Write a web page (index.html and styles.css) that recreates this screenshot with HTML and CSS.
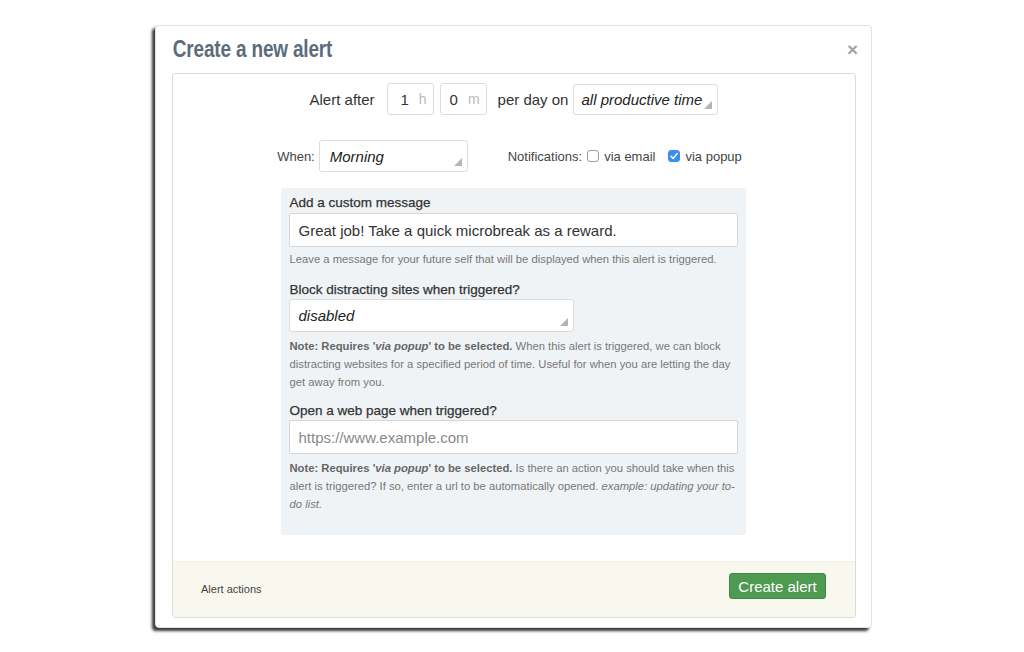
FILE: index.html
```html
<!DOCTYPE html>
<html>
<head>
<meta charset="utf-8">
<link rel="stylesheet" href="styles.css">
</head>
<body>
<div class="dialog">
  <div class="dialog-header">
    <h1 class="title">Create a new alert</h1>
    <span class="close">&times;</span>
  </div>
  <div class="panel">
    <div class="panel-body">
      <div class="row-after">
        <span class="txt">Alert after</span>
        <span class="num-box box-h"><span class="num">1</span><span class="unit">h</span></span>
        <span class="num-box box-m"><span class="num">0</span><span class="unit">m</span></span>
        <span class="txt txt-perday">per day on</span>
        <span class="select select-day">all productive time<i class="tri"></i></span>
      </div>
      <div class="row-when">
        <span class="txt-sm">When:</span>
        <span class="select select-when">Morning<i class="tri"></i></span>
        <span class="txt-sm notif">Notifications:</span>
        <span class="cb"></span>
        <span class="txt-sm">via email</span>
        <span class="cb cb-on"><svg viewBox="0 0 12 12" width="12" height="12"><path d="M3 6.2 L5.1 8.4 L9.2 3.6" fill="none" stroke="#fff" stroke-width="1.5" stroke-linecap="round" stroke-linejoin="round"/></svg></span>
        <span class="txt-sm">via popup</span>
      </div>
      <div class="options">
        <div class="group">
          <label class="label">Add a custom message</label>
          <div class="input">Great job! Take a quick microbreak as a reward.</div>
          <p class="help">Leave a message for your future self that will be displayed when this alert is triggered.</p>
        </div>
        <div class="group">
          <label class="label">Block distracting sites when triggered?</label>
          <div class="select select-block">disabled<i class="tri"></i></div>
          <p class="help"><b>Note: Requires '<em>via popup</em>' to be selected.</b> When this alert is triggered, we can block distracting websites for a specified period of time. Useful for when you are letting the day get away from you.</p>
        </div>
        <div class="group">
          <label class="label">Open a web page when triggered?</label>
          <div class="input placeholder">https://www.example.com</div>
          <p class="help"><b>Note: Requires '<em>via popup</em>' to be selected.</b> Is there an action you should take when this alert is triggered? If so, enter a url to be automatically opened. <em>example: updating your to-do list.</em></p>
        </div>
      </div>
    </div>
    <div class="panel-footer">
      <span class="footer-label">Alert actions</span>
      <span class="btn">Create alert</span>
    </div>
  </div>
</div>
</body>
</html>
```
FILE: styles.css
```css
* { box-sizing: border-box; }
html, body { margin: 0; padding: 0; background: #fff; }
body {
  font-family: "Liberation Sans", Arial, Helvetica, sans-serif;
  color: #333;
  padding: 25px 0 0 155px;
  height: 652px;
}
.dialog {
  width: 717px;
  height: 603px;
  background: #fff;
  border: 1px solid #e2e2e2;
  border-radius: 4px;
  box-shadow: -3px 3px 3px rgba(0,0,0,0.78);
  padding: 0 15px 9px 16px;
  display: flex;
  flex-direction: column;
}
.dialog-header {
  height: 47px;
  display: flex;
  align-items: center;
  justify-content: space-between;
}
.title {
  margin: 0 0 2px;
  font-family: "Liberation Sans", Arial, sans-serif;
  font-weight: bold;
  font-size: 24px;
  color: #5c6c7c;
  padding-left: 1px;
  transform: scaleX(0.79);
  transform-origin: left center;
  white-space: nowrap;
  letter-spacing: -0.2px;
}
.close {
  font-size: 19px;
  font-weight: bold;
  color: #a3a3a3;
  margin-right: -2px;
  padding-top: 1px;
}
.panel {
  flex: 1;
  border: 1px solid #dcdcdc;
  border-radius: 3px;
  display: flex;
  flex-direction: column;
  overflow: hidden;
}
.panel-body {
  flex: 1;
  padding-top: 9px;
}
.row-after {
  display: flex;
  align-items: center;
  justify-content: center;
  height: 32px;
}
.txt { font-size: 15px; color: #333; }
.num-box {
  width: 47px;
  height: 32px;
  border: 1px solid #dcdcdc;
  border-radius: 3px;
  display: flex;
  align-items: center;
  justify-content: flex-end;
  padding-right: 6px;
  font-size: 15px;
}
.box-h { margin-left: 12px; }
.box-m { margin-left: 6px; }
.num { color: #333; margin-right: 10px; }
.unit { color: #bbb; font-size: 14px; }
.txt-perday { margin-left: 11px; }
.select {
  position: relative;
  border: 1px solid #dcdcdc;
  border-radius: 3px;
  font-style: italic;
  font-size: 15px;
  color: #222;
  display: flex;
  align-items: center;
  background: #fff;
}
.tri {
  position: absolute;
  right: 5px;
  bottom: 5px;
  width: 0;
  height: 0;
  border-left: 8px solid transparent;
  border-bottom: 8px solid #b5b5b5;
}
.select-day {
  margin-left: 5px;
  width: 145px;
  height: 31px;
  padding-left: 7px;
}
.row-when {
  margin-top: 25px;
  display: flex;
  align-items: center;
  justify-content: center;
  height: 32px;
  padding-right: 9px;
}
.txt-sm { font-size: 13px; color: #444; }
.select-when {
  margin-left: 4px;
  width: 149px;
  height: 32px;
  padding-left: 10px;
}
.notif { margin-left: 40px; margin-right: 5px; }
.cb {
  width: 12px;
  height: 12px;
  border: 1px solid #9a9a9a;
  border-radius: 3px;
  background: #fff;
  margin-right: 5px;
  display: inline-flex;
}
.cb-on {
  background: #3b8df0;
  border-color: #3b8df0;
  margin-left: 13px;
}
.cb-on svg { margin: -1px; }
.options {
  width: 465px;
  margin: 16px auto 0;
  padding: 6px 8px 22px 8px;
  background: #f0f3f6;
  border-radius: 3px;
  position: relative;
  left: -1px;
}
.group + .group { margin-top: 13px; }
.group:last-child { margin-top: 11px; }
.label {
  display: block;
  font-size: 13.5px;
  line-height: 18px;
  color: #333;
  margin-bottom: 1px;
  padding-left: 1px;
  -webkit-text-stroke: 0.25px #333;
}
.group + .group .label { margin-bottom: 0; }
.input {
  height: 34px;
  background: #fff;
  border: 1px solid #d6d6d6;
  border-radius: 2px;
  font-size: 15px;
  color: #333;
  display: flex;
  align-items: center;
  padding-left: 9px;
}
.placeholder { color: #8a8a8a; }
.select-block {
  width: 285px;
  height: 33px;
  padding-left: 9px;
}
.help {
  margin: 3px 0 0;
  font-size: 11.25px;
  line-height: 18px;
  color: #777;
  padding-left: 1px;
}
.group + .group .help { margin-top: 5px; }
.help b { color: #666; }
.panel-footer {
  height: 56px;
  background: #f9f8ee;
  border-top: 1px solid #f3f2e6;
  display: flex;
  justify-content: space-between;
  align-items: center;
  padding: 0 29px 7px 28px;
}
.footer-label {
  font-size: 11px;
  color: #444;
  padding-top: 6px;
}
.btn {
  background: #4d9a50;
  border: 1px solid #43894a;
  border-radius: 3px;
  color: #fff;
  font-size: 15px;
  height: 26px;
  width: 97px;
  display: flex;
  align-items: center;
  justify-content: center;
}
```
